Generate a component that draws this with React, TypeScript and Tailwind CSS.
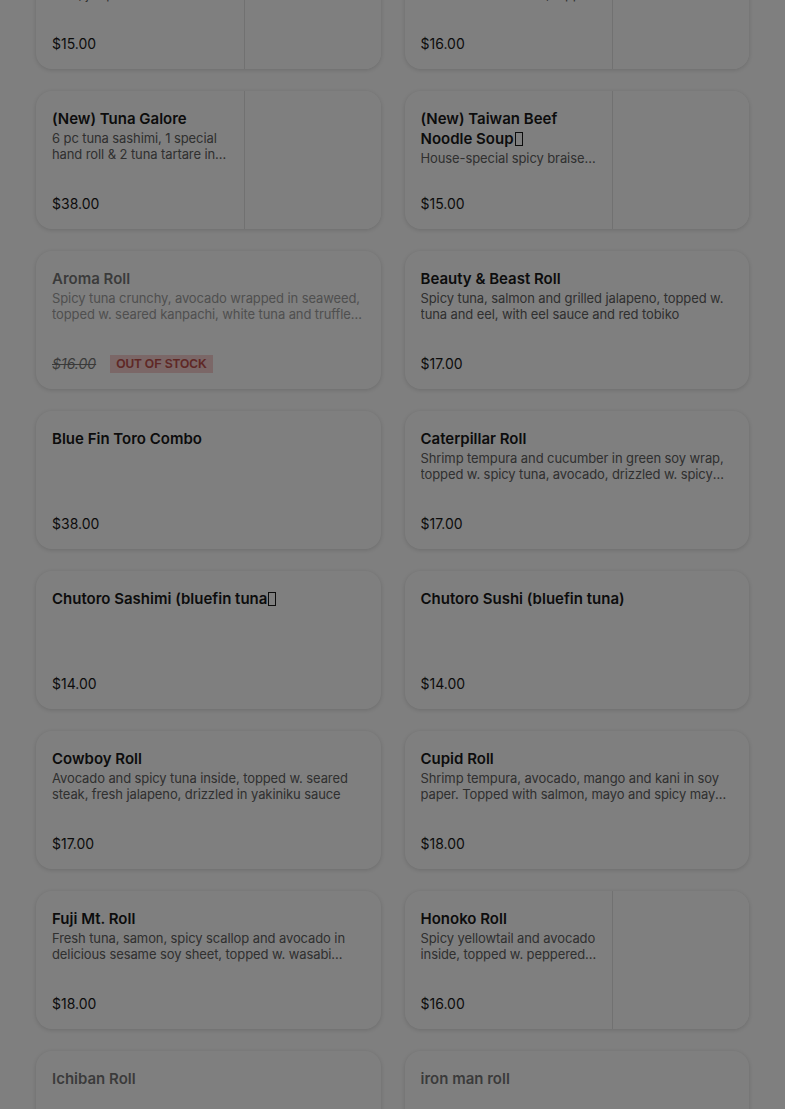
import React from 'react';

type Item = {
  name: React.ReactNode;
  desc?: string;
  price: string;
  image?: boolean;
  soldOut?: boolean;
  dim?: boolean;
  oneLine?: boolean;
};

// missing-glyph box the reference shows after some names
const Tofu = () => (
  <span className="inline-block w-[8px] h-[14px] border border-current align-[-2px] ml-[1px]" />
);

const items: Item[] = [
  { name: 'Spicy Tuna Crispy Rice', desc: 'Crispy rice topped with spicy tuna, jalapeno and eel sauce, finished with chopped', price: '$15.00', image: true },
  { name: 'Salmon Lover Set', desc: 'Salmon sashimi, salmon roll and salmon hand roll, topped with ikura and greens', price: '$16.00', image: true },
  { name: '(New) Tuna Galore', desc: '6 pc tuna sashimi, 1 special hand roll & 2 tuna tartare in crispy cones', price: '$38.00', image: true },
  { name: <>(New) Taiwan Beef Noodle Soup<Tofu /></>, desc: 'House-special spicy braised beef noodle soup', price: '$15.00', image: true, oneLine: true },
  { name: 'Aroma Roll', desc: 'Spicy tuna crunchy, avocado wrapped in seaweed, topped w. seared kanpachi, white tuna and truffle oil', price: '$16.00', soldOut: true },
  { name: 'Beauty & Beast Roll', desc: 'Spicy tuna, salmon and grilled jalapeno, topped w. tuna and eel, with eel sauce and red tobiko', price: '$17.00' },
  { name: 'Blue Fin Toro Combo', price: '$38.00' },
  { name: 'Caterpillar Roll', desc: 'Shrimp tempura and cucumber in green soy wrap, topped w. spicy tuna, avocado, drizzled w. spicy mayo', price: '$17.00' },
  { name: <>Chutoro Sashimi (bluefin tuna<Tofu /></>, price: '$14.00' },
  { name: 'Chutoro Sushi (bluefin tuna)', price: '$14.00' },
  { name: 'Cowboy Roll', desc: 'Avocado and spicy tuna inside, topped w. seared steak, fresh jalapeno, drizzled in yakiniku sauce', price: '$17.00' },
  { name: 'Cupid Roll', desc: 'Shrimp tempura, avocado, mango and kani in soy paper. Topped with salmon, mayo and spicy mayo and eel sauce', price: '$18.00' },
  { name: 'Fuji Mt. Roll', desc: 'Fresh tuna, samon, spicy scallop and avocado in delicious sesame soy sheet, topped w. wasabi tobiko', price: '$18.00' },
  { name: 'Honoko Roll', desc: 'Spicy yellowtail and avocado inside, topped w. peppered tuna', price: '$16.00', image: true },
  { name: 'Ichiban Roll', price: '$18.00', dim: true },
  { name: 'iron man roll', price: '$17.00', dim: true },
];

function MenuCard({ item }: { item: Item }) {
  const faded = item.soldOut || item.dim;
  return (
    <div className="h-[138px] flex bg-white rounded-2xl shadow-[0_1px_5px_rgba(0,0,0,0.16)] overflow-hidden">
      <div className={`flex-1 min-w-0 flex flex-col justify-between pt-[18px] pb-[15px] pl-4 ${item.image ? 'pr-3' : 'pr-4'}`}>
        <div className={faded ? 'opacity-60' : ''}>
          <div className="text-[15px] leading-5 font-semibold text-[#191919]">{item.name}</div>
          {item.desc ? (
            <p
              className={`mt-[1px] text-[13px] leading-4 tracking-[-0.1px] text-[#606060] ${
                item.oneLine ? 'line-clamp-1' : 'line-clamp-2'
              }`}
            >
              {item.desc}
            </p>
          ) : null}
        </div>
        <div className="flex items-center gap-[14px] text-[14px] leading-5 text-[#191919]">
          {item.soldOut ? (
            <>
              <span className="italic line-through opacity-60">{item.price}</span>
              <span className="px-[6px] h-[18px] flex items-center bg-[#f5c4c4] text-[#b0261e] text-[12px] font-bold uppercase font-['Liberation_Sans',sans-serif] opacity-80">
                Out of stock
              </span>
            </>
          ) : (
            <span>{item.price}</span>
          )}
        </div>
      </div>
      {item.image ? <div className="w-[137px] shrink-0 border-l border-[#e2e2e2] bg-white" /> : null}
    </div>
  );
}

export default function App() {
  return (
    <div className="relative h-screen overflow-hidden bg-white font-['Inter',sans-serif]">
      <div className="-mt-[69px] px-9 grid grid-cols-2 gap-x-6 gap-y-[22px]">
        {items.map((item, i) => (
          <MenuCard key={i} item={item} />
        ))}
      </div>
      <div className="fixed inset-0 bg-black/50" />
    </div>
  );
}
